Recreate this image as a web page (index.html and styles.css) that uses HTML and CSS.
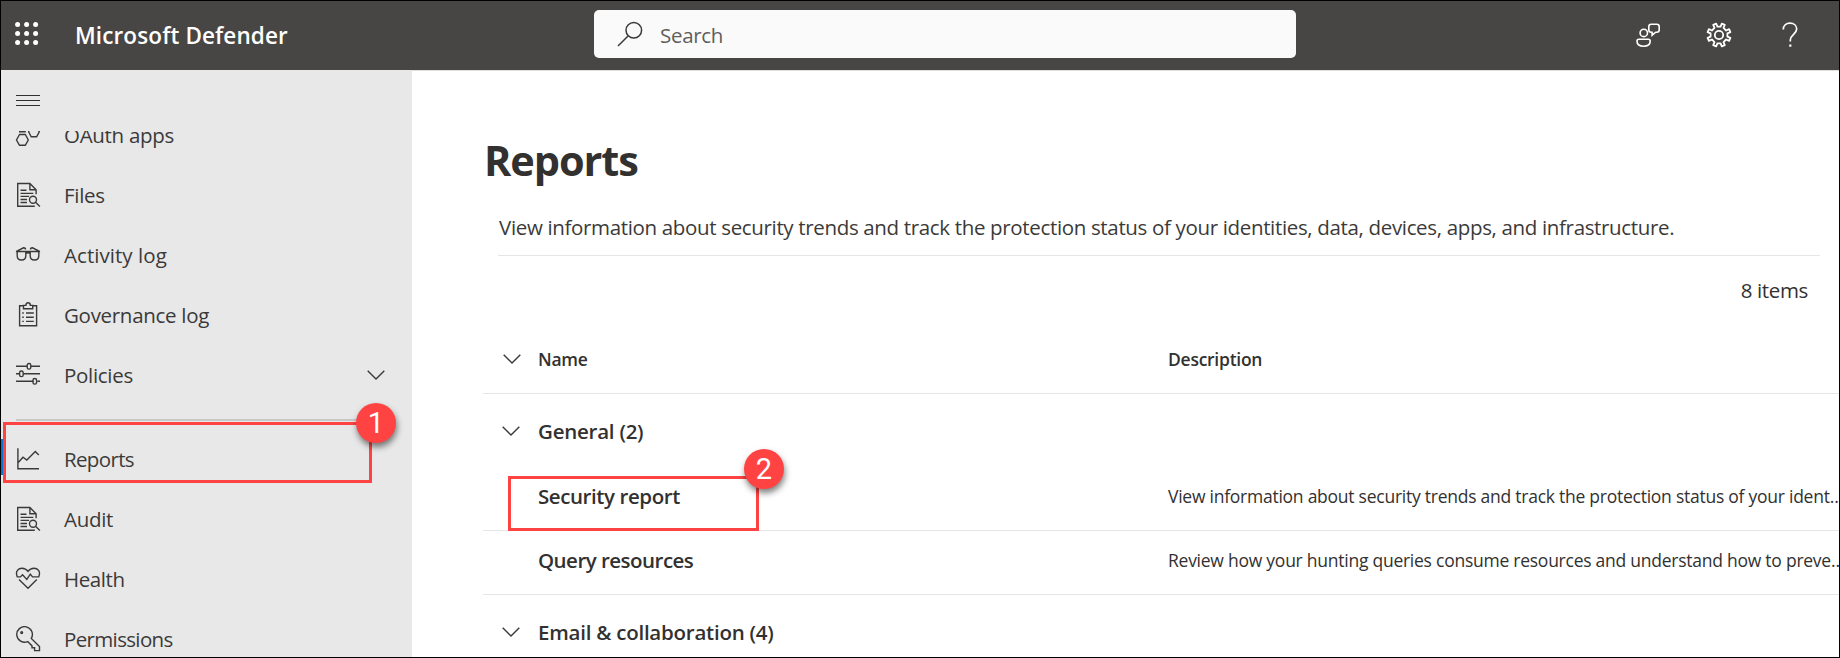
FILE: index.html
```html
<!DOCTYPE html>
<html lang="en">
<head>
<meta charset="utf-8">
<title>Reports - Microsoft Defender</title>
<link rel="stylesheet" href="styles.css">
</head>
<body>
<div class="app">
  <header class="topbar">
    <svg class="waffle" width="24" height="24" viewBox="0 0 24 24" fill="#fff"><circle cx="2.600" cy="2.600" r="2.500"/><circle cx="11.600" cy="2.600" r="2.500"/><circle cx="20.600" cy="2.600" r="2.500"/><circle cx="2.600" cy="11.600" r="2.500"/><circle cx="11.600" cy="11.600" r="2.500"/><circle cx="20.600" cy="11.600" r="2.500"/><circle cx="2.600" cy="20.600" r="2.500"/><circle cx="11.600" cy="20.600" r="2.500"/><circle cx="20.600" cy="20.600" r="2.500"/></svg>
    <span class="brand">Microsoft Defender</span>
    <div class="search">
      <svg width="26" height="26" viewBox="0 0 26 26" fill="none" stroke="#3b3a39" stroke-width="1.500"><circle cx="16.800" cy="9.200" r="7.800"/><path d="M11.300 14.700 1 25"/></svg>
      <span>Search</span>
    </div>
    <div class="tools">
      <svg class="feedback" width="24" height="24" viewBox="0 0 24 24" fill="none" stroke="#fff" stroke-width="1.600"><circle cx="7.800" cy="9.900" r="3.700"/><path d="M2.800 16.300h9.600q1.800 0 1.800 1.700c0 3-2.400 5.200-6.600 5.200S1 21 1 18q0-1.700 1.800-1.700z"/><path d="M15.200 1.200h5.600q2.400 0 2.400 2.400v3.200q0 2.400-2.400 2.400h-1.100l-3.600 3v-3h-.9q-2.400 0-2.400-2.400V3.600q0-2.400 2.400-2.400z"/></svg>
      <svg class="gear" width="26" height="26" viewBox="0 0 26 26" fill="none" stroke="#fff" stroke-width="1.800" stroke-linejoin="round"><circle cx="13" cy="13" r="4.200"/><path d="M11.400 4.600 10.200 1.600 7.200 2.900 8.500 5.900 5.900 8.500 2.900 7.200 1.600 10.200 4.600 11.400v3.200L1.600 15.800 2.900 18.800 5.900 17.500 8.500 20.100 7.200 23.100 10.200 24.400 11.400 21.400h3.200l1.200 3 3-1.300-1.300-3 2.600-2.600 3 1.300 1.300-3-3-1.200v-3.200l3-1.200-1.300-3-3 1.300-2.600-2.600 1.300-3-3-1.300-1.200 3z"/></svg>
      <svg class="help" width="18" height="26" viewBox="0 0 18 26" fill="none" stroke="#fff" stroke-width="1.700"><path d="M2.300 7.600c0-3.900 2.800-6.400 6.700-6.400s6.700 2.400 6.700 5.900c0 5-6.400 5.600-6.400 11v1.500"/><path d="M9.300 22.500v2.200" stroke-width="2.200"/></svg>
    </div>
  </header>
  <div class="body">
    <nav class="side">
      <svg class="menu" width="24" height="12" viewBox="0 0 24 12" stroke="#323130"><path d="M0 .5h24M0 5.500h24M0 10.500h24"/></svg>
      <div class="list">
        <a class="item cut"><svg viewBox="0 0 26 26"><path d="M4.500 12.500 1.500 18l3 5.300h5.800l3-5.300-3-5.500zM4 9.800h6.800M13.600 9.800l2.600 5h5.400l2.700-5-2.700-5h-5.400z"/></svg><span>OAuth apps</span></a>
        <a class="item"><svg viewBox="0 0 26 26"><use href="#doc"/></svg><span>Files</span></a>
        <a class="item"><svg viewBox="0 0 26 26"><path d="M2.200 9.500h8.600v4.200q0 4.300-4.300 4.300t-4.300-4.300zM15.200 9.500h8.600v4.200q0 4.300-4.300 4.300t-4.300-4.300zM10.800 11.500q2.200-1.500 4.400 0M1 9.500h24M1 9.600l7.500-3.800q2 0 2 1.600M25 9.600l-7.500-3.800q-2 0-2 1.600"/></svg><span class="wide">Activity log</span></a>
        <a class="item"><svg viewBox="0 0 26 26"><path d="M8.500 3.700H4.600v20h17v-20h-3.900M8.500 3.400h2.400q0-2.600 2.200-2.600t2.200 2.600h2.400v3.300H8.500zM11 11h7.800M11 15.200h7.800M11 19.400h7.800"/><path d="M7.200 11h1.600M7.200 15.200h1.600M7.200 19.400h1.600"/></svg><span>Governance log</span></a>
        <a class="item"><svg viewBox="0 0 26 26"><path d="M1 4.300h11M16 4.300h9M1 11.800h3.400M8.400 11.800H25M1 19.300h17.400M22.400 19.300H25"/><rect x="12.200" y="1.500" width="3.600" height="5.600" rx="1.700"/><rect x="4.600" y="9" width="3.600" height="5.600" rx="1.700"/><rect x="18" y="16.500" width="3.600" height="5.600" rx="1.700"/></svg><span>Policies</span><svg class="chev" viewBox="0 0 18 10"><path d="m.7.700 8.300 8.300 8.300-8.300"/></svg></a>
        <hr class="rule">
        <a class="item active"><svg viewBox="0 0 26 26"><path d="M2.900 2.200v20.500H24M3 16.800 8 11.300l3.800 2.800 8.500-8.600 3.500 3.600"/></svg><span class="tight">Reports</span></a>
        <a class="item"><svg viewBox="0 0 26 26"><g id="doc"><path d="M19.800 24.200H2.700V1.500h12.200l6.200 6.200v4.600M14.900 1.500v6.200h6.200"/><path d="M5.500 8.300h6M5.500 11.400h12.800M5.500 14.400h8.600M5.500 17.500h6.500M5.500 20.500h6.500"/><circle cx="18" cy="17.700" r="3.500"/><path d="m20.500 20.200 4.400 4.200"/></g></svg><span>Audit</span></a>
        <a class="item"><svg viewBox="0 0 26 26"><path d="M2.300 10.900C-.2 5 3.600 2.200 7 2.200q3.800 0 6 3.200 2.200-3.200 6-3.200c3.400 0 7.200 2.800 4.700 8.700H17.500l-2.200-2.800-3.500 5.300-4.200-4.700-2.200 2.200H1.800M4 13.500l9 8.700 8.800-8.700"/></svg><span class="health">Health</span></a>
        <a class="item"><svg viewBox="0 0 26 26"><path d="M12.700 15.600 17 19.900v1.900h2.600v2.800h4.900v-4.100L16.300 12.400A7.800 7.800 0 1 0 12.700 15.600z"/><circle cx="6.700" cy="6.600" r=".9"/></svg><span class="tight">Permissions</span></a>
      </div>
      <div class="callout one"><span class="badge">1</span></div>
    </nav>
    <main class="main">
      <h1>Reports</h1>
      <p class="lede">View information about security trends and track the protection status of your identities, data, devices, apps, and infrastructure.</p>
      <p class="count">8 items</p>
      <div class="grid">
        <div class="row head"><svg class="chev" viewBox="0 0 18 10"><path d="m.7.700 8.300 8.300 8.300-8.300"/></svg><span class="name">Name</span><span class="label">Description</span></div>
        <div class="row group"><svg class="chev" viewBox="0 0 18 10"><path d="m.7.700 8.300 8.300 8.300-8.300"/></svg><span class="name">General (2)</span></div>
        <div class="row entry"><span class="name">Security report</span><span class="desc">View information about security trends and track the protection status of your ident…</span></div>
        <div class="row entry"><span class="name query">Query resources</span><span class="desc">Review how your hunting queries consume resources and understand how to preve…</span></div>
        <div class="row group"><svg class="chev" viewBox="0 0 18 10"><path d="m.7.700 8.300 8.300 8.300-8.300"/></svg><span class="name">Email &amp; collaboration (4)</span></div>
      </div>
      <div class="callout two"><span class="badge">2</span></div>
    </main>
  </div>
</div>
</body>
</html>
```
FILE: styles.css
```css
* { box-sizing: border-box; }
body { margin: 0; font: 20.5px/28px "Open Sans", "Noto Sans", sans-serif; color: #323130; }
svg { display: block; flex: none; }
.app { position: relative; display: flex; flex-direction: column; width: 1840px; height: 658px; border: 1px solid #000; overflow: hidden; background: #fff; }

.topbar { display: grid; grid-template-columns: 61px 518px 702px 1fr; align-items: center; flex: none; height: 69px; padding-left: 14px; background: #484644; color: #fff; }
.waffle { margin-bottom: 3px; }
.brand { font-size: 22.5px; font-weight: 600; letter-spacing: .12px; margin-left: -1px; }
.search { display: flex; align-items: center; gap: 17px; height: 48px; padding-left: 23px; margin-bottom: 3px; border-radius: 5px; background: #fafafa; color: #605e5c; letter-spacing: -.3px; }
.search svg { margin-bottom: 1px; }
.search span { padding-top: 2px; }
.tools { display: flex; align-items: center; padding-left: 340px; margin-bottom: 2px; }
.gear { margin-left: 46px; }
.help { margin-left: 49px; }

.body { display: flex; flex: 1; min-height: 0; }
.side { position: relative; width: 411px; flex: none; padding-top: 25px; background: #e8e8e8; }
.menu { margin-left: 15px; }
.list { height: 527px; margin-top: 24px; overflow: hidden; }
.item { position: relative; display: flex; align-items: center; height: 60px; padding-left: 14px; letter-spacing: -.3px; color: #3b3a39; }
.item.cut { margin-top: -26px; }
.item > svg { width: 26px; height: 26px; margin-bottom: 1px; fill: none; stroke: #3b3a39; stroke-width: 1.400; }
.item > span { padding-left: 23px; }
.wide { letter-spacing: 0; }
.health { letter-spacing: -.4px; }
.tight { letter-spacing: -.65px; }
.item .wide { letter-spacing: .05px; }
.active::before { content: ""; position: absolute; left: 0; top: 10px; width: 3px; height: 36px; background: #0078d4; }
.chev, .item > .chev { width: 18px; height: 10px; fill: none; stroke: #3b3a39; stroke-width: 1.400; }
.item > .chev { margin-left: auto; margin-right: 27px; }
.rule { height: 2px; margin: 14px 27px 8px 15px; border: 0; background: #c8c8c8; }

.main { position: relative; flex: 1; min-width: 0; padding: 59px 0 0 71px; border-top: 1px solid #e1dfdd; }
h1 { margin: 0 0 0 1px; font-size: 41.5px; line-height: 60px; letter-spacing: -1.100px; }
.lede { margin: 23px 19px 0 15px; padding: 0 0 14px 1px; border-bottom: 1px solid #e6e6e6; letter-spacing: -.34px; white-space: nowrap; color: #3b3a39; }
.count { margin: 20px 31px 0 0; text-align: right; letter-spacing: -.35px; }
.grid { margin-top: 22px; }
.row { display: grid; grid-template-columns: 19px 36px 630px 1fr; align-items: center; border-bottom: 1px solid #e6e6e6; white-space: nowrap; }
.name { grid-column: 3; font-weight: 600; letter-spacing: -.24px; }
.row .chev { grid-column: 2; grid-row: 1; }
.head { height: 68px; padding-bottom: 1px; }
.head .name, .label { font-size: 17.500px; font-weight: 600; letter-spacing: -.26px; }
.head .chev { margin-left: 1px; }
.group { height: 73px; border-bottom: 0; }
.entry { height: 64px; padding-bottom: 5px; }
.entry .name { letter-spacing: -.42px; }
.entry .query { letter-spacing: -.52px; }
.desc { font-size: 17.500px; letter-spacing: -.25px; overflow: hidden; }

.callout { position: absolute; border: 3px solid #ff4343; }
.one { left: 2px; top: 352px; width: 369px; height: 61px; }
.two { left: 96px; top: 405px; width: 251px; height: 55px; }
.badge { position: absolute; display: flex; align-items: center; justify-content: center; width: 40px; height: 40px; border-radius: 50%; background: #ff4343; color: #fff; font: 29px/40px Roboto, "Liberation Sans", sans-serif; box-shadow: 1px 4px 6px rgba(0, 0, 0, .5); }
.one .badge { left: 350px; top: -22px; }
.two .badge { left: 233px; top: -30px; }
```
